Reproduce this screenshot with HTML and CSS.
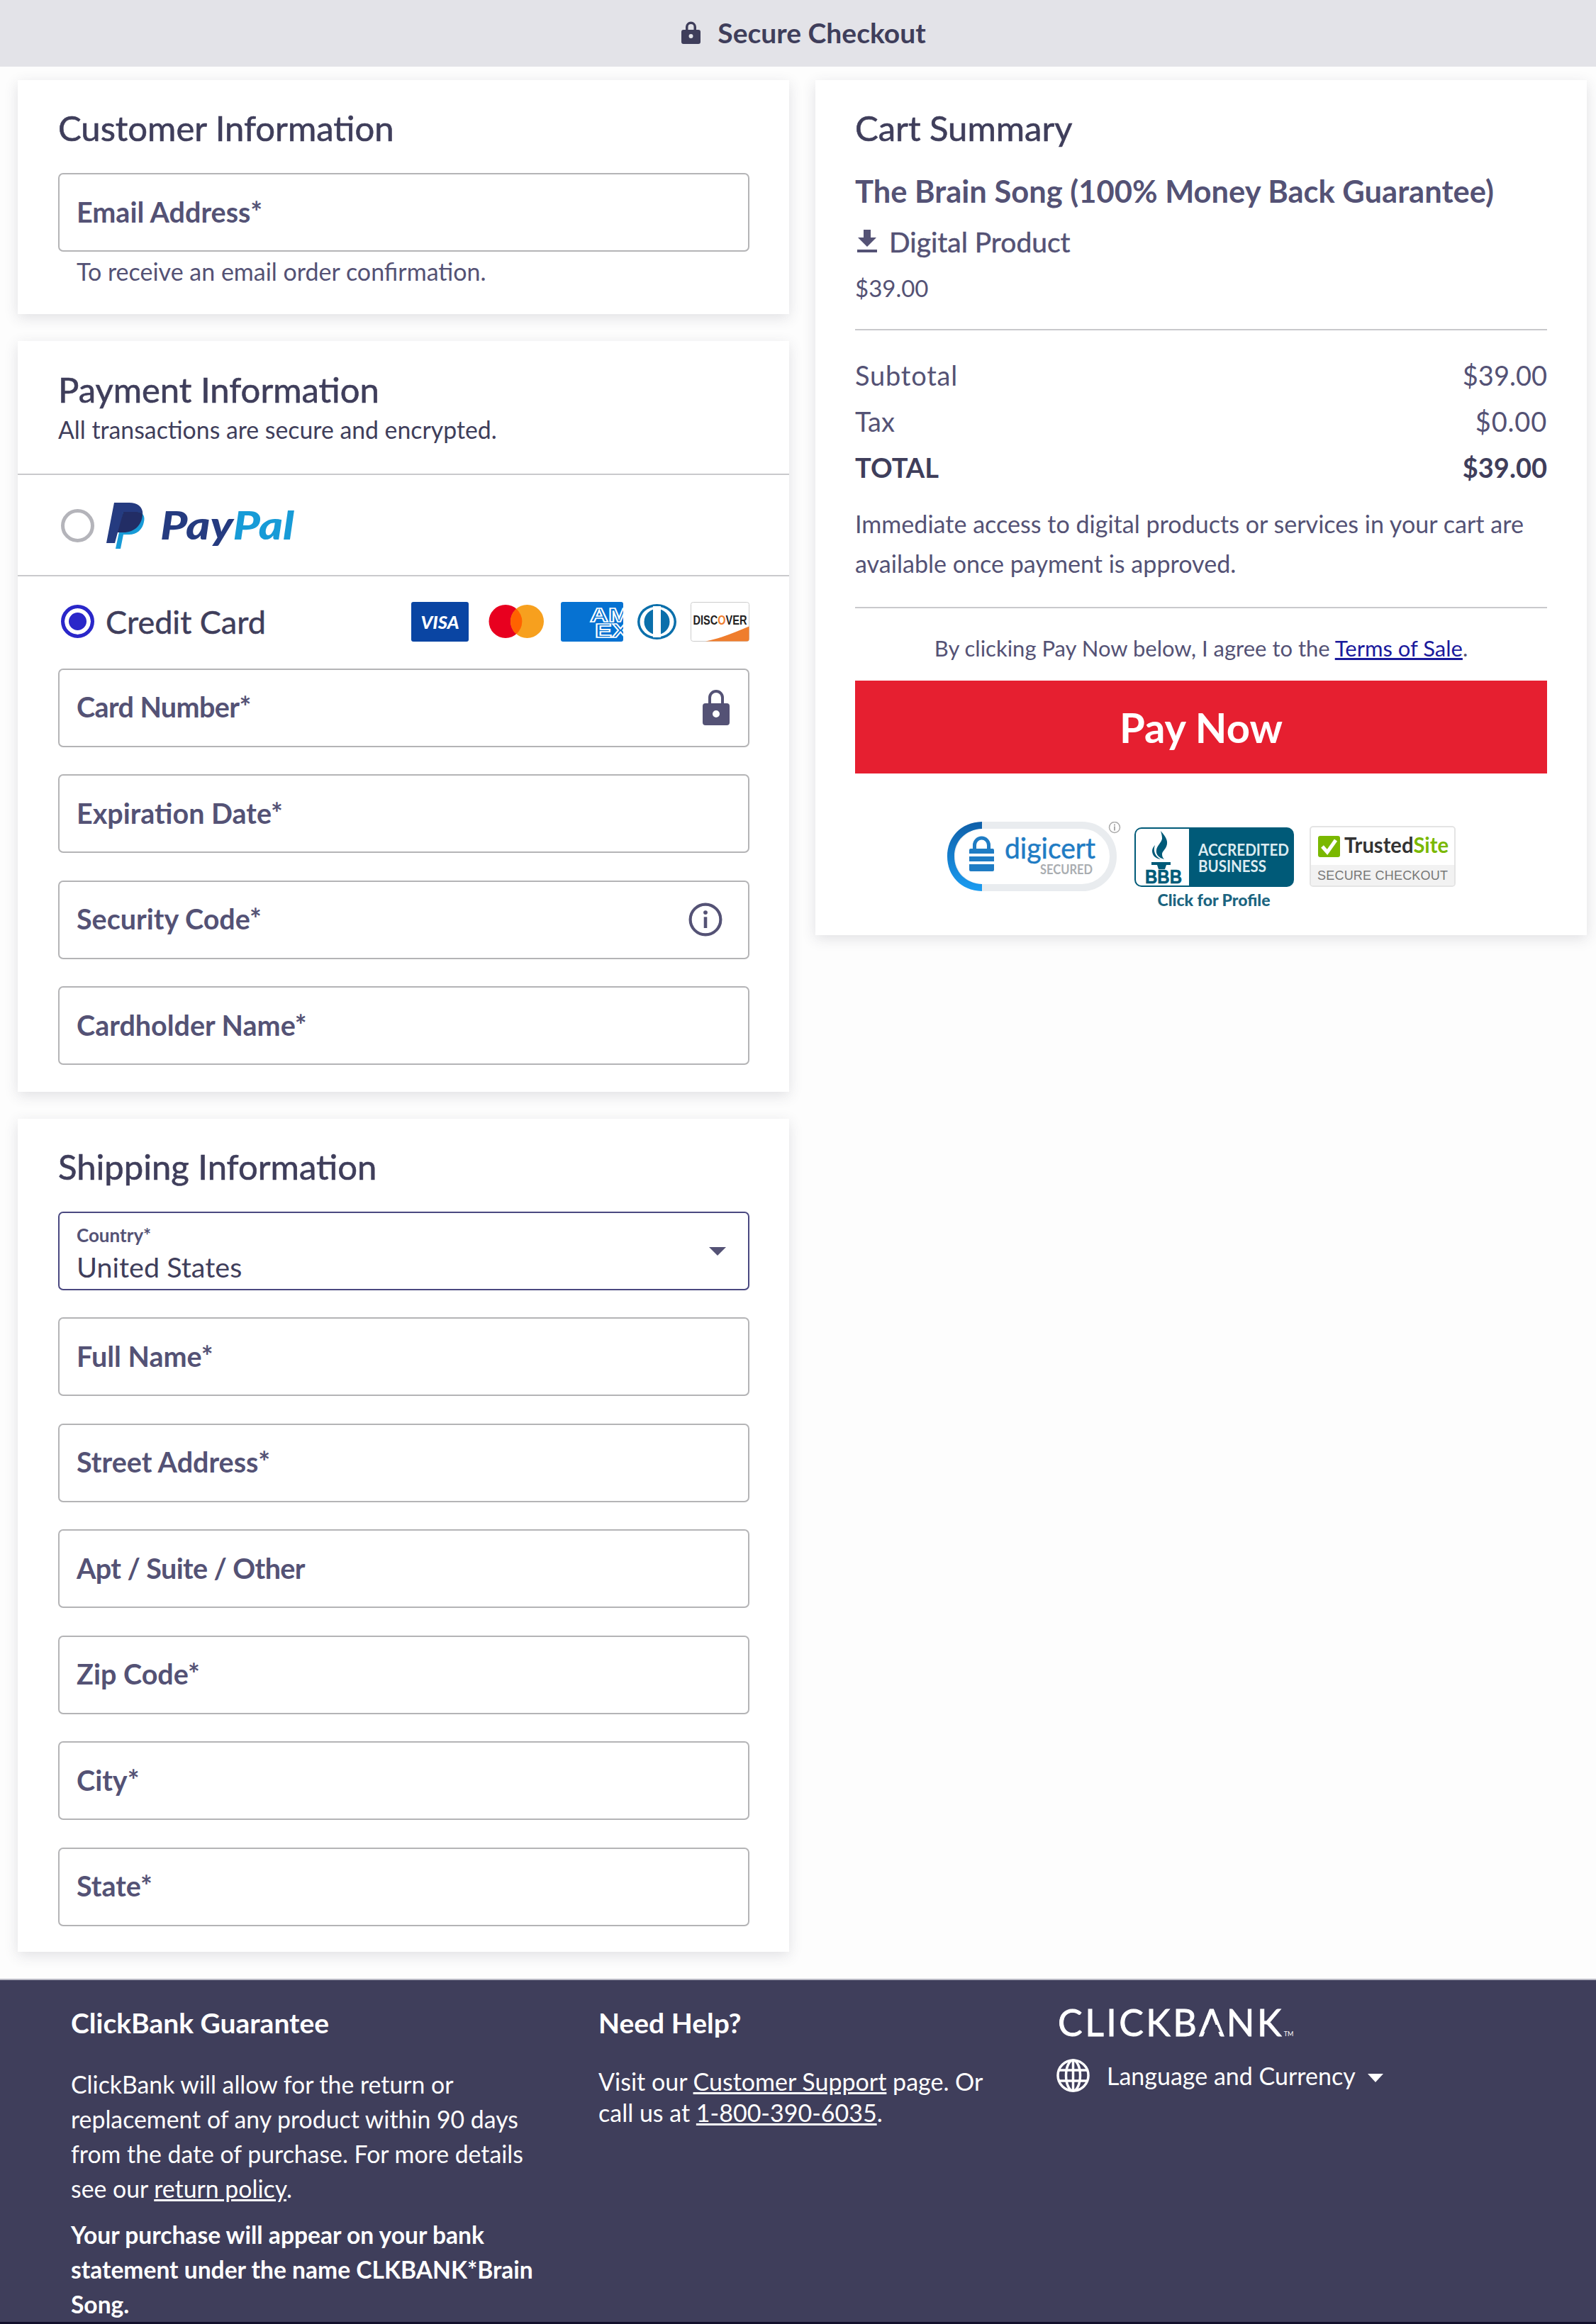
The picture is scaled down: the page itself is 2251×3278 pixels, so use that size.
FILE: index.html
```html
<!DOCTYPE html>
<html lang="en">
<head>
<meta charset="utf-8">
<title>Secure Checkout</title>
<link rel="stylesheet" href="styles.css">
</head>
<body>
<header class="topbar">
  <svg class="top-lock" viewBox="0 0 27 32"><path fill="#3f3e5b" fill-rule="evenodd" d="M6 12V8a7.500 7.500 0 0 1 15 0v4h3a3 3 0 0 1 3 3v14a3 3 0 0 1-3 3H3a3 3 0 0 1-3-3V15a3 3 0 0 1 3-3zm3.500 0h8V8a4 4 0 0 0-8 0zM13.500 18a3 3 0 1 0 0 6 3 3 0 0 0 0-6z"/></svg>
  <span>Secure Checkout</span>
</header>

<main class="layout">
  <div class="col">
    <section class="card">
      <h2 class="title">Customer Information</h2>
      <div class="field"><span class="label">Email Address*</span></div>
      <p class="helper">To receive an email order confirmation.</p>
    </section>

    <section class="card card-payment">
      <div class="pay-head">
        <h2 class="title">Payment Information</h2>
        <p class="sub">All transactions are secure and encrypted.</p>
      </div>
      <div class="pay-option">
        <span class="radio"></span>
        <svg class="pp-mark" viewBox="0 0 54 65">
          <path fill="#253b80" d="M11 0h21c13 0 21 7 19 19-2 14-12 23-27 23h-8l-4 15H0z"/>
          <path fill="#179bd7" d="M24 13h18c9 0 13 5 11 14-2 11-10 18-21 18h-8l-4 20H13z"/>
          <path fill="#222d65" d="M24 13h18c5 0 8 1 9 4-1 15-12 25-27 25h-8z"/>
        </svg>
        <svg class="pp-word" viewBox="0 0 188 52"><text class="pp-text" x="-1" y="38" textLength="189" lengthAdjust="spacingAndGlyphs"><tspan fill="#253b80">Pay</tspan><tspan fill="#179bd7">Pal</tspan></text></svg>
      </div>
      <div class="cc-block">
        <div class="cc-row">
          <span class="radio radio-on"></span>
          <span class="cc-name">Credit Card</span>
          <div class="cc-logos">
            <svg class="logo logo-visa" viewBox="0 0 81 56"><rect width="81" height="56" rx="3" fill="#0a45a3"/><text class="visa-text" x="40.500" y="38" text-anchor="middle" textLength="54" lengthAdjust="spacingAndGlyphs">VISA</text></svg>
            <svg class="logo logo-mc" viewBox="0 0 78 47"><circle cx="24" cy="23.500" r="23.500" fill="#e8001f"/><circle cx="54.500" cy="23.500" r="23.500" fill="#f7a01e"/><path fill="#ff6200" d="M39.200 5.700a23.500 23.500 0 0 1 0 35.600 23.500 23.500 0 0 1 0-35.600z"/></svg>
            <svg class="logo logo-amex" viewBox="0 0 88 56"><rect width="88" height="56" rx="3" fill="#0672d2"/><text class="amex-text" x="41" y="28" textLength="56" lengthAdjust="spacingAndGlyphs">AM</text><text class="amex-text" x="48" y="50" textLength="48" lengthAdjust="spacingAndGlyphs">EX</text></svg>
            <svg class="logo logo-diners" viewBox="0 0 55 50"><ellipse cx="27.500" cy="25" rx="27.500" ry="25" fill="#0a6fab"/><ellipse cx="27.500" cy="25" rx="24" ry="21.500" fill="#fff"/><circle cx="27.500" cy="25" r="18" fill="#0a6fab"/><rect x="22" y="3" width="11" height="44" fill="#fff"/></svg>
            <svg class="logo logo-discover" viewBox="0 0 83 56"><rect x=".5" y=".5" width="82" height="55" rx="3" fill="#fff" stroke="#ccc"/><path fill="#ef7d2d" d="M21 55.500c25-5 45-14 61.500-21V52.500a3 3 0 0 1-3 3z"/><text class="disc-text" x="41.500" y="32" text-anchor="middle" textLength="76" lengthAdjust="spacingAndGlyphs">DISC<tspan fill="#ef7d2d">O</tspan>VER</text></svg>
          </div>
        </div>
        <div class="stack">
          <div class="field"><span class="label label-tight">Card Number*</span>
            <svg class="ico-lock" viewBox="0 0 38 50"><path fill="#545275" fill-rule="evenodd" d="M8 19v-8a11 11 0 0 1 22 0v8h4a4 4 0 0 1 4 4v23a4 4 0 0 1-4 4H4a4 4 0 0 1-4-4V23a4 4 0 0 1 4-4zm4 0h14v-8a7 7 0 0 0-14 0zM19 29a5 5 0 1 0 0 10 5 5 0 0 0 0-10z"/></svg>
          </div>
          <div class="field"><span class="label">Expiration Date*</span></div>
          <div class="field"><span class="label">Security Code*</span>
            <svg class="ico-info" viewBox="0 0 46 46"><circle cx="23" cy="23" r="20.500" fill="none" stroke="#545275" stroke-width="4"/><circle cx="23" cy="13.500" r="2.800" fill="#545275"/><rect x="20.800" y="19.500" width="4.400" height="15" fill="#545275"/></svg>
          </div>
          <div class="field"><span class="label">Cardholder Name*</span></div>
        </div>
      </div>
    </section>

    <section class="card">
      <h2 class="title">Shipping Information</h2>
      <div class="stack">
        <div class="field field-select">
          <div class="select-text"><span class="mini">Country*</span><span class="value">United States</span></div>
          <span class="caret"></span>
        </div>
        <div class="field"><span class="label">Full Name*</span></div>
        <div class="field"><span class="label">Street Address*</span></div>
        <div class="field"><span class="label label-tight">Apt / Suite / Other</span></div>
        <div class="field"><span class="label">Zip Code*</span></div>
        <div class="field"><span class="label">City*</span></div>
        <div class="field"><span class="label">State*</span></div>
      </div>
    </section>
  </div>

  <div class="col">
    <section class="card card-cart">
      <h2 class="title">Cart Summary</h2>
      <h3 class="product">The Brain Song (100% Money Back Guarantee)</h3>
      <div class="digital">
        <svg class="ico-dl" viewBox="0 0 28 32"><path fill="#545275" d="M9 0h10v11h8L14 24 1 11h8zM0 28h28v4H0z"/></svg>
        <span>Digital Product</span>
      </div>
      <p class="price">$39.00</p>
      <hr class="rule">
      <div class="sum-row sum-first"><span class="sum-wide">Subtotal</span><span>$39.00</span></div>
      <div class="sum-row"><span>Tax</span><span class="sum-wide">$0.00</span></div>
      <div class="sum-row sum-total"><span>TOTAL</span><span>$39.00</span></div>
      <p class="note">Immediate access to digital products or services in your cart are available once payment is approved.</p>
      <hr class="rule rule-2">
      <p class="terms">By clicking Pay Now below, I agree to the <a class="terms-link" href="#">Terms of Sale</a>.</p>
      <button class="pay" type="button">Pay Now</button>
      <div class="badges">
        <svg class="badge-digicert" viewBox="0 0 250 98">
          <defs><linearGradient id="dg" x1="0" y1="0" x2="0" y2="1"><stop offset="0" stop-color="#0f5fa8"/><stop offset="1" stop-color="#1b9df2"/></linearGradient></defs>
          <rect x="6" y="5" width="228" height="88" rx="44" fill="#fff" stroke="#e9ecef" stroke-width="10"/>
          <path fill="url(#dg)" d="M49 0v10C26 11 10 27 10 49s16 38 39 39v10C19 97 0 76 0 49S19 1 49 0z"/>
          <path fill="#1f7cc4" d="M36 38v-5a12.500 12.500 0 0 1 25 0v5h-5v-5a7.500 7.500 0 0 0-15 0v5zM33 38h31a2 2 0 0 1 2 2v5H31v-5a2 2 0 0 1 2-2zM31 49h35v7H31zM31 60h35v8a2 2 0 0 1-2 2H33a2 2 0 0 1-2-2z"/>
          <text class="dc-word" x="81" y="52" textLength="128" lengthAdjust="spacingAndGlyphs">digicert</text>
          <text class="dc-sec" x="131" y="74" textLength="74" lengthAdjust="spacingAndGlyphs">SECURED</text>
          <circle cx="236" cy="8" r="7.500" fill="#fff" stroke="#aaa" stroke-width="1.500"/>
          <rect x="235" y="6.500" width="2" height="6" fill="#aaa"/><rect x="235" y="3.500" width="2" height="2" fill="#aaa"/>
        </svg>
        <div class="bbb">
          <svg class="badge-bbb" viewBox="0 0 227 86">
            <rect x="1" y="1" width="225" height="84" rx="10" fill="#005a78"/>
            <path fill="#fff" d="M11 3h67v80H11a8 8 0 0 1-8-8V11a8 8 0 0 1 8-8z"/>
            <path fill="#005a78" d="M38 6c8 9 11 15 8 22-2 5-6 7-6 11 0 3 1 5 3 7-8-2-12-7-11-13 1-7 7-10 8-16 0-4-1-8-2-11zM30 26c-3 8 0 16 8 20-8-1-12-6-12-12 0-3 2-6 4-8z"/>
            <path fill="#005a78" d="M25 50h27v4H46l-2 6h-9l-2-6h-8z"/>
            <text class="bbb-mark" x="16" y="80" textLength="52" lengthAdjust="spacingAndGlyphs">BBB</text>
            <text class="bbb-t" x="91" y="41" textLength="128" lengthAdjust="spacingAndGlyphs">ACCREDITED</text>
            <text class="bbb-t" x="91" y="64" textLength="96" lengthAdjust="spacingAndGlyphs">BUSINESS</text>
          </svg>
          <span class="bbb-link">Click for Profile</span>
        </div>
        <svg class="badge-trust" viewBox="0 0 206 86">
          <rect x="1" y="1" width="204" height="84" rx="4" fill="#fff" stroke="#e4e4e4" stroke-width="2"/>
          <path fill="#f2f2f2" d="M2 55h202v26a3 3 0 0 1-3 3H5a3 3 0 0 1-3-3z"/>
          <rect x="12" y="14" width="31" height="30" rx="3" fill="#7ab800"/>
          <path fill="none" stroke="#fff" stroke-width="5" d="M18 29l7 8 12-17"/>
          <text class="tr-word" x="49" y="38" textLength="147" lengthAdjust="spacingAndGlyphs">Trusted<tspan fill="#7ab800">Site</tspan></text>
          <text class="tr-sub" x="11" y="76" textLength="184" lengthAdjust="spacing">SECURE CHECKOUT</text>
        </svg>
      </div>
    </section>
  </div>
</main>

<footer class="footer">
  <div class="f-col f-one">
    <h4 class="f-head">ClickBank Guarantee</h4>
    <p class="f-text">ClickBank will allow for the return or<br>replacement of any product within 90 days<br>from the date of purchase. For more details<br>see our <a class="f-link" href="#">return policy</a>.</p>
    <p class="f-bold">Your purchase will appear on your bank<br>statement under the name CLKBANK*Brain<br>Song.</p>
  </div>
  <div class="f-col f-two">
    <h4 class="f-head">Need Help?</h4>
    <p class="f-help">Visit our <a class="f-link" href="#">Customer Support</a> page. Or<br>call us at <a class="f-link" href="#">1-800-390-6035</a>.</p>
  </div>
  <div class="f-col f-three">
    <div class="brand">CLICKB<span class="brand-a">A</span>NK<span class="tm">TM</span></div>
    <div class="lang">
      <svg class="globe" viewBox="0 0 47 47" fill="none" stroke="#fff" stroke-width="3.500"><circle cx="23.500" cy="23.500" r="21.500"/><ellipse cx="23.500" cy="23.500" rx="10" ry="21.500"/><path d="M4 16h39M4 31h39M23.500 2v43"/></svg>
      <span>Language and Currency</span>
      <span class="lang-caret"></span>
    </div>
  </div>
</footer>
</body>
</html>
```

FILE: styles.css
```css
* { box-sizing: border-box; }
html, body { margin: 0; padding: 0; }
body {
  width: 2251px;
  height: 3278px;
  overflow: hidden;
  background: #fdfdfd;
  color: #3f3e5b;
  font-family: "Lato", "Liberation Sans", sans-serif;
}
p, h2, h3, h4 { margin: 0; }

.topbar {
  height: 94px;
  background: #e3e3e8;
  display: flex;
  align-items: center;
  justify-content: center;
  gap: 24px;
  padding: 0 0 3px 16px;
  font-size: 39px;
  font-weight: 700;
}
.top-lock { width: 27px; height: 32px; }

.layout {
  display: flex;
  gap: 37px;
  padding: 19px 13px 38px 25px;
  height: 2697px;
}
.col { width: 1088px; display: flex; flex-direction: column; gap: 37.500px; }

.card {
  background: #fff;
  padding: 37px 56px 36px 57px;
  box-shadow: 0 5px 18px rgba(60, 60, 80, .15);
}
.title {
  font-size: 49px;
  line-height: 60px;
  font-weight: 400;
  -webkit-text-stroke: .6px #3f3e5b;
  margin-bottom: 34px;
}
.field {
  height: 111px;
  border: 2px solid #b4b4b6;
  border-radius: 7px;
  padding: 0 26px 3px 24px;
  display: flex;
  align-items: center;
  justify-content: space-between;
  background: #fff;
}
.label { font-size: 39.500px; font-weight: 700; color: #545275; }
.label-tight { letter-spacing: -.6px; }
.helper { font-size: 34px; line-height: 40px; color: #545275; padding: 8px 0 4px 26px; }
.stack { display: flex; flex-direction: column; gap: 38.500px; }

.card-payment { padding: 0; }
.pay-head { padding: 38px 56px 42px 57px; border-bottom: 2px solid #c9c9cc; }
.pay-head .title { margin-bottom: 7px; }
.sub { font-size: 33.800px; line-height: 40px; color: #3f3e5b; }
.pay-option {
  height: 143px;
  padding: 2px 0 0 61px;
  display: flex;
  align-items: center;
  border-bottom: 2px solid #c9c9cc;
}
.radio {
  width: 47px;
  height: 47px;
  flex: none;
  border-radius: 50%;
  border: 5px solid #b4b4ba;
  background: #fff;
}
.radio-on { border: 5px solid #2a27c9; box-shadow: inset 0 0 0 6px #fff; background: #2a27c9; }
.pp-mark { width: 54px; height: 65px; margin-left: 17px; }
.pp-word { width: 188px; height: 52px; margin: 16px 0 0 23px; overflow: visible; }
.pp-text { font-family: "Lato", sans-serif; font-weight: 900; font-style: italic; font-size: 56px; }

.cc-block { padding: 34px 56px 38px 57px; }
.cc-row { display: flex; align-items: center; height: 60px; margin-bottom: 36px; padding-left: 4px; }
.cc-name { font-size: 45px; font-weight: 400; -webkit-text-stroke: .5px #3f3e5b; margin-left: 16px; }
.cc-logos { margin-left: auto; display: flex; align-items: center; }
.logo { display: block; }
.logo-visa { width: 81px; height: 56px; }
.logo-mc { width: 78px; height: 47px; margin-left: 28px; }
.logo-amex { width: 88px; height: 56px; margin-left: 24px; }
.logo-diners { width: 55px; height: 50px; margin-left: 20px; }
.logo-discover { width: 83px; height: 56px; margin-left: 20px; }
.visa-text { font-family: "Lato", sans-serif; font-style: italic; font-weight: 900; font-size: 24px; fill: #fff; }
.amex-text { font-family: "Liberation Sans", sans-serif; font-weight: 700; font-size: 27px; fill: #0672d2; stroke: #fff; stroke-width: 1.600px; }
.disc-text { font-family: "Liberation Sans", sans-serif; font-weight: 700; font-size: 19px; fill: #222; }
.ico-lock { width: 38px; height: 50px; margin-top: 3px; }
.ico-info { width: 48px; height: 48px; margin: 3px 10px 0 0; }

.field-select { border-color: #4a4880; padding: 10px 26px 0 24px; }
.select-text { display: flex; flex-direction: column; }
.mini { font-size: 26px; line-height: 28px; font-weight: 700; color: #545275; }
.value { font-size: 39.500px; line-height: 46px; margin-top: 8px; color: #3f3e5b; }
.caret {
  width: 0;
  height: 0;
  border-left: 12px solid transparent;
  border-right: 12px solid transparent;
  border-top: 12px solid #545275;
  margin: 0 5px 8px 0;
}

.card-cart { padding: 37px 56px 0 56px; height: 1206px; }
.card-cart .title { margin-bottom: 29px; }
.product { font-size: 43.500px; line-height: 60px; font-weight: 700; color: #545275; }
.digital {
  display: flex;
  align-items: center;
  gap: 17px;
  margin-top: 18px;
  padding-left: 3px;
  height: 48px;
  font-size: 39px;
  -webkit-text-stroke: .5px #545275;
  color: #545275;
}
.ico-dl { width: 28px; height: 32px; margin-bottom: 2px; }
.price { margin-top: 21px; font-size: 33px; line-height: 40px; color: #545275; }
.rule { border: 0; height: 2px; background: #c9c9cc; margin: 38px 0 0; }
.rule-2 { margin-top: 33px; }
.sum-row {
  display: flex;
  justify-content: space-between;
  font-size: 38px;
  line-height: 48px;
  margin-top: 17px;
  color: #545275;
}
.sum-first { margin-top: 39px; }
.sum-wide { letter-spacing: .8px; }
.sum-total { font-weight: 700; color: #3f3e5b; }
.note { margin-top: 28px; font-size: 34.100px; line-height: 56px; color: #545275; }
.terms { margin-top: 36px; font-size: 31px; line-height: 40px; text-align: center; color: #545275; }
.terms-link { color: #1a1a9c; text-decoration: underline; }
.pay {
  display: block;
  width: 100%;
  height: 131px;
  margin-top: 26px;
  border: 0;
  background: #e61f30;
  color: #fff;
  font-family: "Lato", sans-serif;
  font-size: 58px;
  font-weight: 700;
}
.badges { display: flex; justify-content: center; gap: 21px; margin-top: 68px; }
.badge-digicert { width: 250px; height: 98px; margin-right: -8px; flex: none; }
.bbb { margin-top: 7px; width: 227px; display: flex; flex-direction: column; align-items: center; flex: none; }
.badge-bbb { width: 227px; height: 86px; }
.bbb-link { font-size: 23px; line-height: 26px; margin-top: 4px; font-weight: 900; color: #1b6480; }
.badge-trust { width: 206px; height: 86px; margin-top: 6px; flex: none; }
.dc-word { font-family: "Lato", sans-serif; font-size: 40px; fill: #1f7cc4; stroke: #1f7cc4; stroke-width: .5px; }
.dc-sec { font-family: "Lato", sans-serif; font-size: 18px; font-weight: 700; fill: #a9adb1; }
.bbb-mark { font-family: "Liberation Sans", sans-serif; font-size: 27px; font-weight: 700; fill: #005a78; stroke: #005a78; stroke-width: .6px; }
.bbb-t { font-family: "Lato", sans-serif; font-size: 22px; font-weight: 700; fill: #dcebf0; }
.tr-word { font-family: "Lato", sans-serif; font-size: 31px; font-weight: 700; fill: #333; }
.tr-sub { font-family: "Liberation Sans", sans-serif; font-size: 18px; fill: #777; }

.footer {
  height: 487px;
  overflow: hidden;
  background: #3f3e5b;
  border-top: 2px solid #b9b9c4;
  border-bottom: 3px solid #12102c;
  color: #fff;
  display: flex;
  padding-left: 100px;
}
.f-one { width: 744px; }
.f-two { width: 648px; }
.f-head { font-size: 39px; line-height: 48px; font-weight: 700; margin-top: 36px; }
.f-text { font-size: 33.800px; line-height: 49px; margin-top: 39px; }
.f-bold { font-size: 33.600px; line-height: 49px; margin-top: 16px; font-weight: 700; }
.f-help { font-size: 34px; line-height: 44px; margin-top: 37px; }
.f-link { color: #fff; text-decoration: underline; }
.brand {
  margin: 29px 0 0;
  font-size: 52px;
  line-height: 60px;
  letter-spacing: 3.400px;
  white-space: nowrap;
  -webkit-text-stroke: .8px #fff;
}
.brand-a { position: relative; display: inline-block; }
.brand-a::after {
  content: "";
  position: absolute;
  left: 7px;
  right: 9px;
  bottom: 16px;
  height: 10px;
  background: #3f3e5b;
  clip-path: polygon(0 100%, 100% 100%, 80% 0, 20% 0);
}
.tm { font-size: 9px; letter-spacing: 0; -webkit-text-stroke: 0; }
.lang {
  display: flex;
  align-items: center;
  margin: 5px 0 0 -2px;
  font-size: 34px;
}
.globe { width: 47px; height: 47px; margin-right: 24px; }
.lang-caret {
  width: 0;
  height: 0;
  margin: 6px 0 0 17px;
  border-left: 11.500px solid transparent;
  border-right: 11.500px solid transparent;
  border-top: 12px solid #fff;
}
```
